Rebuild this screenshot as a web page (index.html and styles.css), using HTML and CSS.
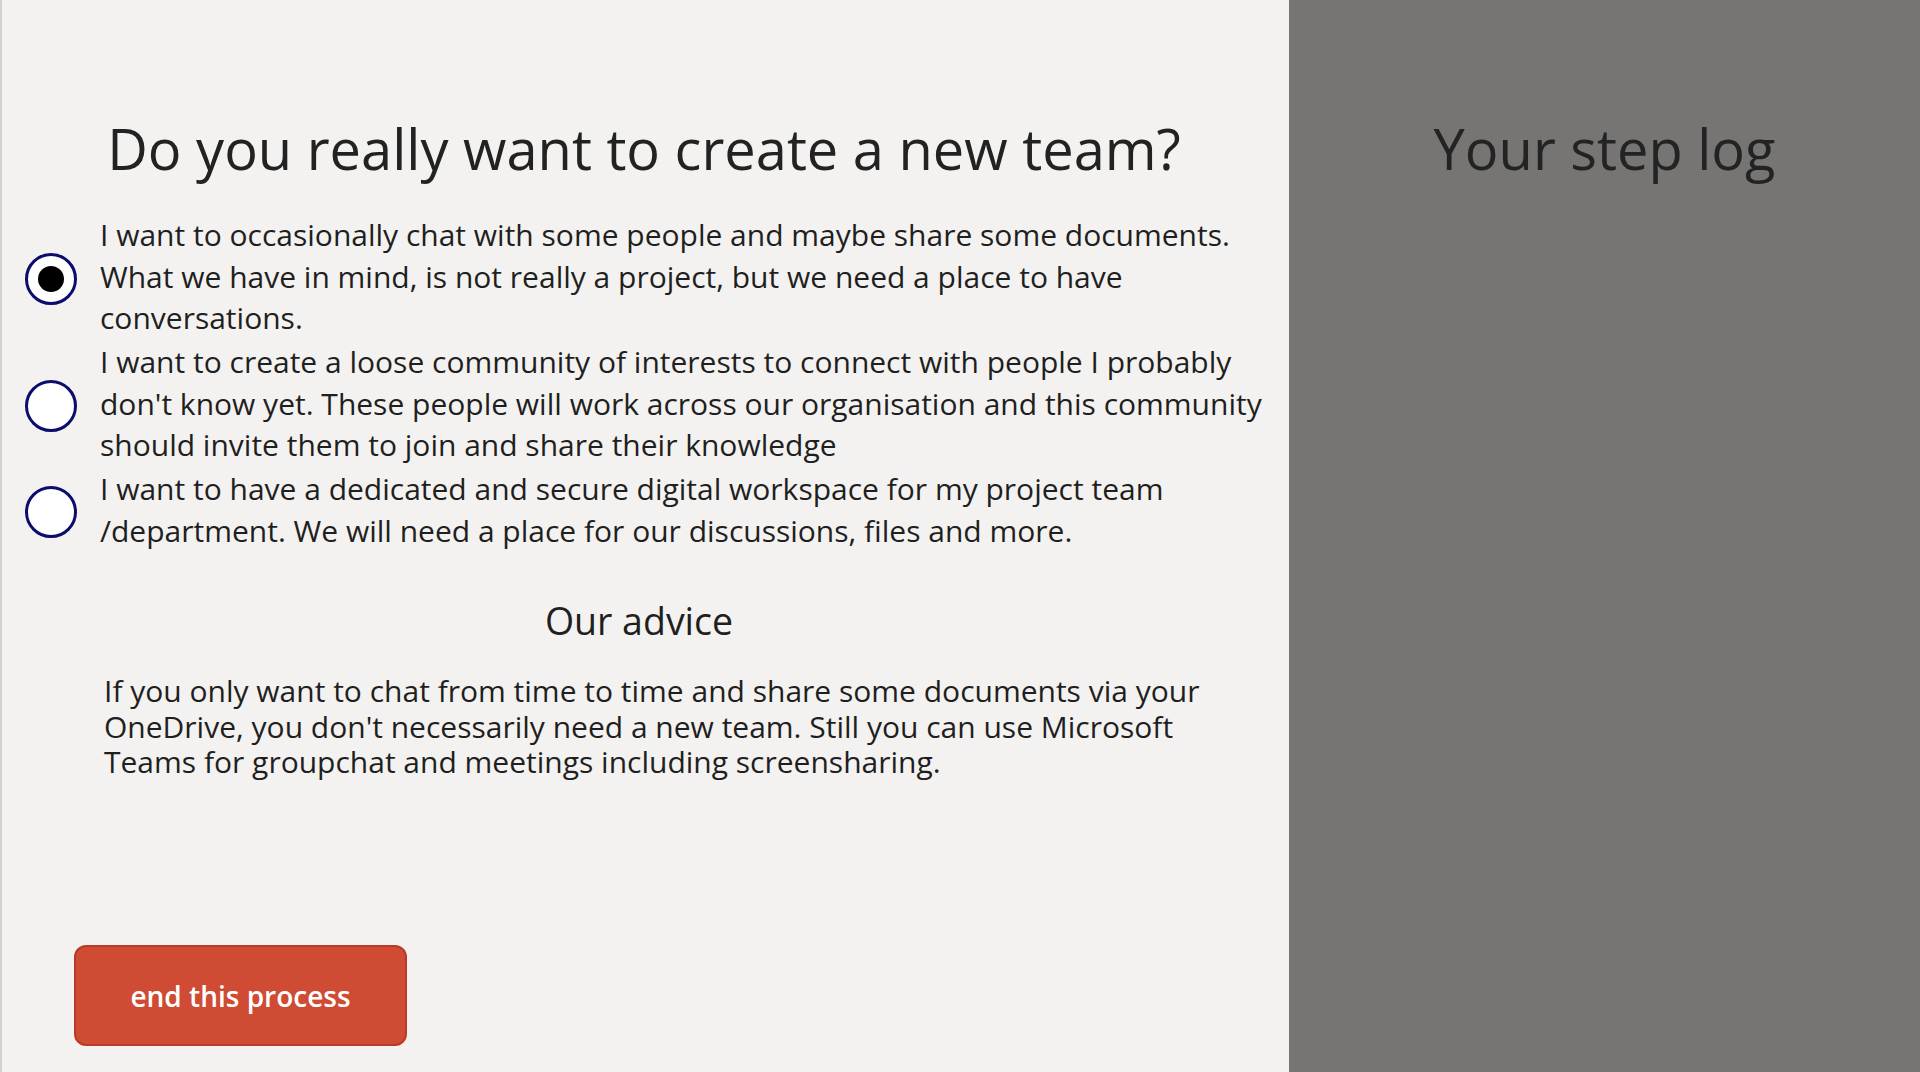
FILE: index.html
```html
<!DOCTYPE html>
<html lang="en">
<head>
<meta charset="utf-8">
<title>Create a new team</title>
<link rel="stylesheet" href="styles.css">
</head>
<body>
<div class="screen">
  <main class="main">
    <div class="content">
      <h1 class="title">Do you really want to create a new team?</h1>
      <div class="options">
        <div class="option">
          <span class="radio checked"></span>
          <span class="option-text">I want to occasionally chat with some people and maybe share some documents. What we have in mind, is not really a project, but we need a place to have conversations.</span>
        </div>
        <div class="option">
          <span class="radio"></span>
          <span class="option-text">I want to create a loose community of interests to connect with people I probably don't know yet. These people will work across our organisation and this community should invite them to join and share their knowledge</span>
        </div>
        <div class="option">
          <span class="radio"></span>
          <span class="option-text">I want to have a dedicated and secure digital workspace for my project team /department. We will need a place for our discussions, files and more.</span>
        </div>
      </div>
      <h2 class="advice-title">Our advice</h2>
      <p class="advice">If you only want to chat from time to time and share some documents via your OneDrive, you don't necessarily need a new team. Still you can use Microsoft Teams for groupchat and meetings including screensharing.</p>
    </div>
    <button class="end-btn" type="button">end this process</button>
  </main>
  <aside class="log">
    <h2 class="log-title">Your step log</h2>
  </aside>
</div>
</body>
</html>
```

FILE: styles.css
```css
html, body {
  margin: 0;
  padding: 0;
}
body {
  font-family: "Open Sans", "Noto Sans", sans-serif;
  color: #1f1f1f;
  background: #f3f2f0;
}
.screen {
  display: flex;
  width: 1920px;
  height: 1072px;
  overflow: hidden;
}
.main {
  width: 1289px;
  flex: none;
  box-sizing: border-box;
  background: #f3f2f0;
  border-left: 2px solid #d2d1cf;
  display: flex;
  flex-direction: column;
}
.content {
  width: 1284px;
  padding-top: 108px;
}
.title {
  margin: 0;
  font-size: 56px;
  font-weight: 400;
  line-height: 80px;
  text-align: center;
  color: #222;
}
.options {
  margin-top: 26px;
  padding-left: 23px;
  display: flex;
  flex-direction: column;
  gap: 2.5px;
}
.option {
  display: flex;
  align-items: center;
  gap: 23px;
}
.radio {
  flex: none;
  width: 52px;
  height: 52px;
  margin-top: 5px;
  box-sizing: border-box;
  border: 3px solid #0c0c6c;
  border-radius: 50%;
  background: #fff;
  display: flex;
  align-items: center;
  justify-content: center;
}
.radio.checked::after {
  content: "";
  width: 26px;
  height: 26px;
  border-radius: 50%;
  background: #000;
}
.option-text {
  width: 1180px;
  font-size: 30px;
  line-height: 41.5px;
}
.advice-title {
  margin: 44px 10px 0 0;
  font-size: 37.5px;
  font-weight: 400;
  line-height: 51px;
  text-align: center;
}
.advice {
  margin: 27px 0 0 102px;
  width: 1130px;
  font-size: 30px;
  line-height: 35.5px;
}
.end-btn {
  align-self: flex-start;
  margin: auto 0 26px 72px;
  width: 333px;
  height: 101px;
  box-sizing: border-box;
  background: #cf4b33;
  border: 2px solid #b63c29;
  border-radius: 12px;
  color: #fff;
  font-family: "Open Sans", "Noto Sans", sans-serif;
  font-size: 28px;
  font-weight: 600;
  padding: 0;
}
.log {
  flex: 1;
  background: #767574;
  padding-top: 108px;
}
.log-title {
  margin: 0;
  font-size: 56px;
  font-weight: 400;
  line-height: 80px;
  text-align: center;
  color: #232323;
}
```
